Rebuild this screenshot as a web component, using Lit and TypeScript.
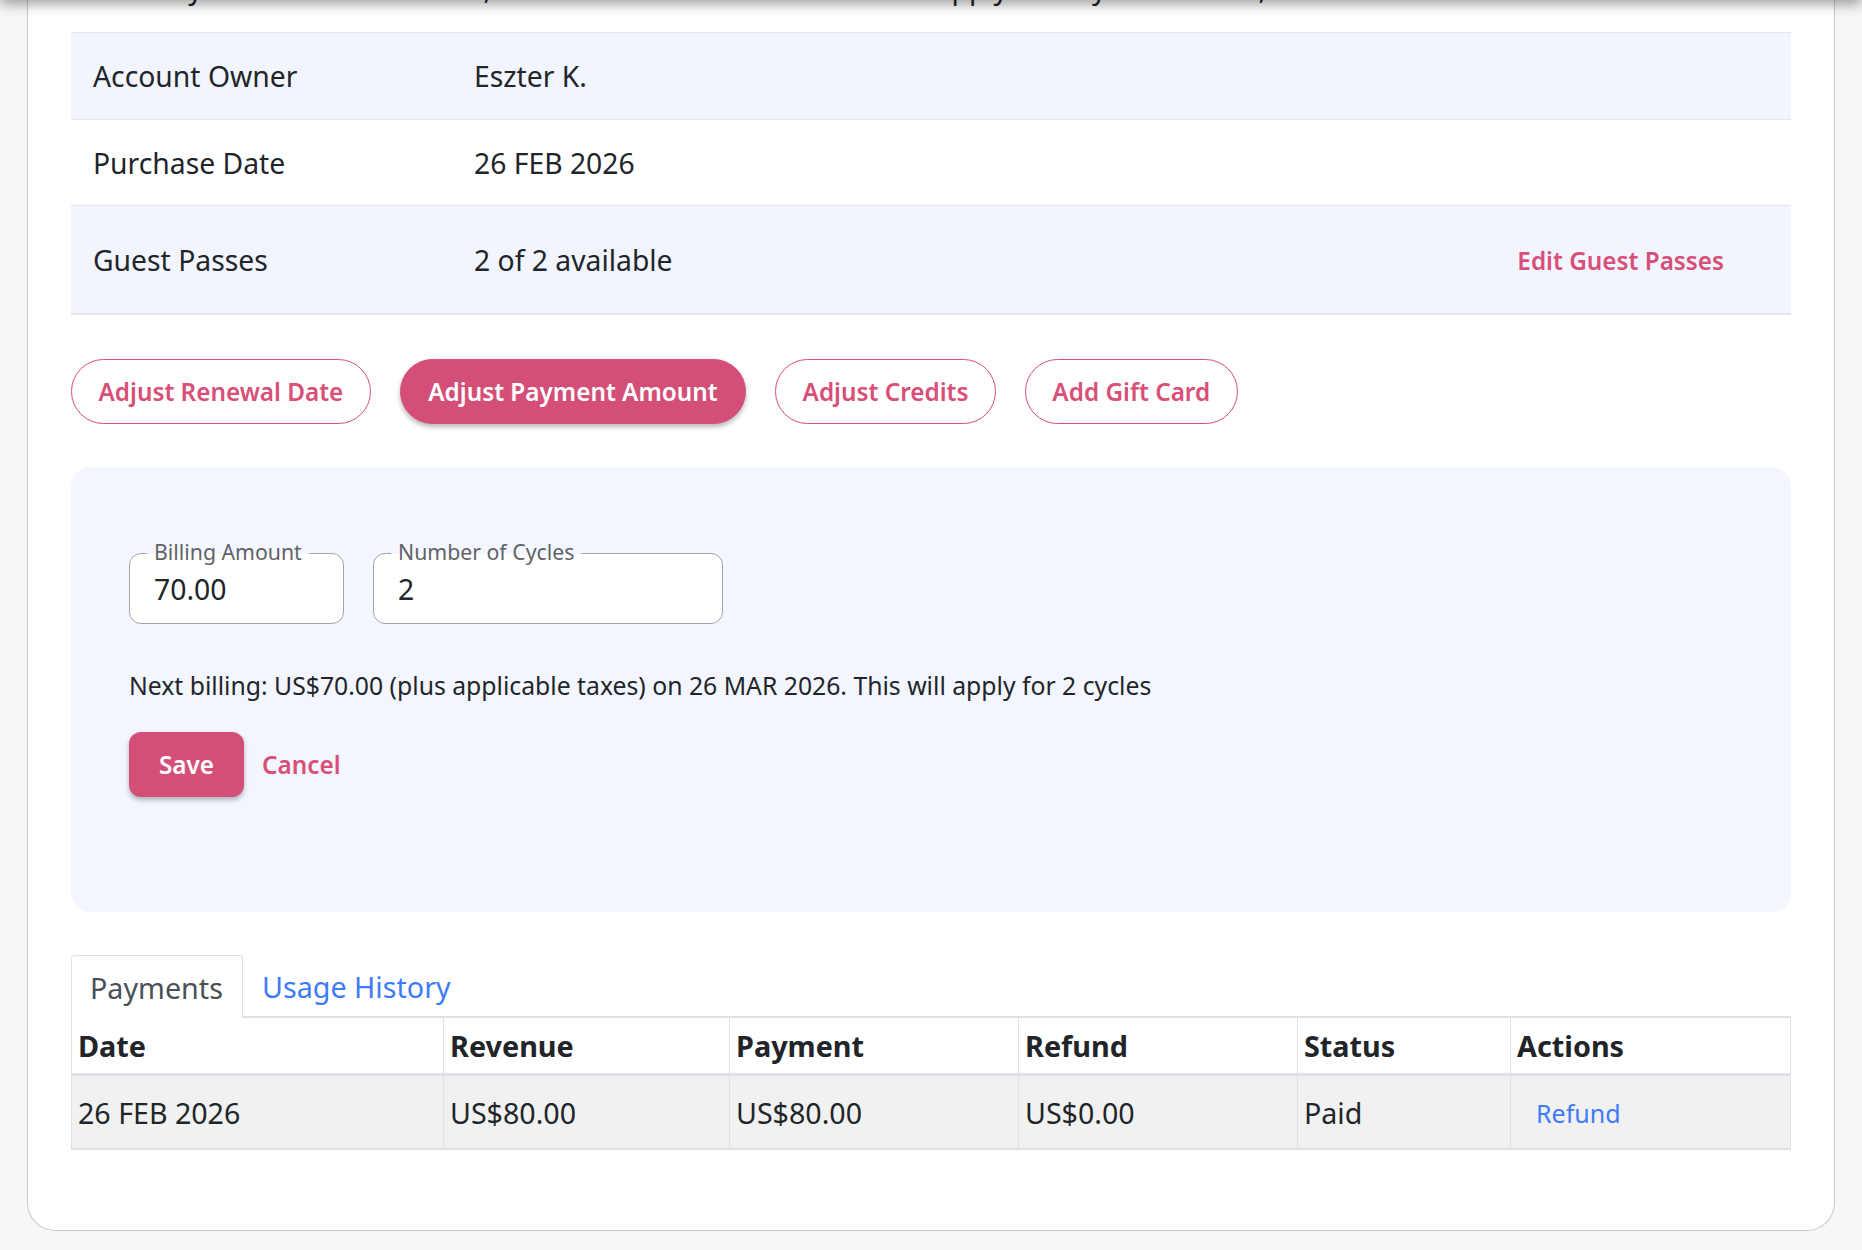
import { css, html, LitElement } from 'lit'
import { customElement, state } from 'lit/decorators.js'

interface InfoRow {
  label: string
  value: string
  height: number
  action?: string
}

const infoRows: InfoRow[] = [
  { label: 'Account Owner', value: 'Eszter K.', height: 87 },
  { label: 'Purchase Date', value: '26 FEB 2026', height: 86 },
  { label: 'Guest Passes', value: '2 of 2 available', height: 110, action: 'Edit Guest Passes' },
]

const adjustments = ['Adjust Renewal Date', 'Adjust Payment Amount', 'Adjust Credits', 'Add Gift Card']

const columns = [
  { title: 'Date', value: '26 FEB 2026', width: 372 },
  { title: 'Revenue', value: 'US$80.00', width: 286 },
  { title: 'Payment', value: 'US$80.00', width: 289 },
  { title: 'Refund', value: 'US$0.00', width: 279 },
  { title: 'Status', value: 'Paid', width: 213 },
  { title: 'Actions', value: '', width: 280 },
]

@customElement('app-root')
export class AppRoot extends LitElement {
  static styles = css`
    :host {
      display: block;
      height: 1250px;
      overflow: hidden;
      position: relative;
      background: #f7f7f7;
      font-family: 'Noto Sans', sans-serif;
      color: #212529;
    }
    .top-shadow {
      position: absolute;
      top: -10px;
      left: 0;
      right: 0;
      height: 10px;
      box-shadow: 0 2px 14px rgba(0, 0, 0, 0.55);
    }
    .card {
      box-sizing: border-box;
      height: 1231px;
      margin: 0 27px;
      padding: 0 43px;
      background: #fff;
      border: 1px solid #c9c9d6;
      border-top: none;
      border-radius: 0 0 28px 28px;
    }
    .clipped {
      height: 32px;
      display: flex;
      align-items: flex-end;
      font-size: 28.3px;
      line-height: 38px;
      box-sizing: border-box;
      overflow: hidden;
      padding: 0 22px 25px;
      white-space: nowrap;
    }
    .clipped .lbl {
      width: 381px;
      flex: none;
    }
    .info {
      display: flex;
      align-items: center;
      padding: 0 67px 0 22px;
      border-top: 1px solid #e3e6ea;
      font-size: 28.3px;
      box-sizing: border-box;
    }
    .info.last {
      border-bottom: 2px solid #e3e6ea;
    }
    .info.shade {
      background: #f2f5fe;
    }
    .info .lbl {
      width: 381px;
      flex: none;
    }
    .info .val {
      flex: 1;
    }
    .link {
      color: #d84f78;
      font-weight: 600;
      font-size: 24.3px;
      line-height: 36px;
    }
    .info .link {
      padding-top: 2px;
    }
    .pills {
      display: flex;
      gap: 29px;
      margin-top: 44px;
    }
    .pill {
      box-sizing: border-box;
      height: 65px;
      padding: 0 26.5px;
      border: 1px solid #d84f78;
      border-radius: 33px;
      background: #fff;
      color: #d84f78;
      font: 600 24.3px 'Noto Sans', sans-serif;
    }
    .pill.active {
      padding: 0 27.5px;
      background: #d44f78;
      color: #fff;
      box-shadow: 0 3px 5px rgba(0, 0, 0, 0.28);
    }
    .panel {
      box-sizing: border-box;
      height: 445px;
      margin-top: 43px;
      padding: 86px 58px 0;
      background: #f3f6ff;
      border-radius: 20px;
    }
    .fields {
      display: flex;
      gap: 29px;
    }
    .field {
      position: relative;
      box-sizing: border-box;
      height: 71px;
      padding: 16px 24px 0;
      background: #fff;
      border: 1px solid #a3a3a8;
      border-radius: 12px;
      font-size: 28.4px;
      line-height: 38px;
    }
    .field label {
      position: absolute;
      top: -15px;
      left: 17px;
      padding: 0 7px;
      font-size: 21.25px;
      line-height: 26px;
      color: #5f6368;
      background: linear-gradient(#f3f6ff 57%, #fff 57%);
    }
    .note {
      margin: 45px 0 0;
      font-size: 24.75px;
      line-height: 34px;
    }
    .form-actions {
      display: flex;
      align-items: center;
      gap: 18px;
      margin-top: 29px;
    }
    .save {
      box-sizing: border-box;
      width: 115px;
      height: 65px;
      border: none;
      border-radius: 12px;
      background: #d44f78;
      color: #fff;
      font: 600 24.3px 'Noto Sans', sans-serif;
      box-shadow: 0 3px 5px rgba(0, 0, 0, 0.28);
    }
    .tabs {
      display: flex;
      margin-top: 43px;
      height: 63px;
      font-size: 28.7px;
    }
    .tab {
      box-sizing: border-box;
      height: 63px;
      padding: 12px 19px 0;
      line-height: 40px;
      color: #3f7bf6;
    }
    .tab.active {
      width: 172px;
      padding-left: 18px;
      color: #495057;
      background: #fff;
      border: 1px solid #dee2e6;
      border-bottom: none;
      border-radius: 4px 4px 0 0;
      position: relative;
      z-index: 1;
    }
    table {
      width: 1719px;
      margin-top: -2px;
      border-collapse: collapse;
      table-layout: fixed;
      font-size: 28.6px;
    }
    th,
    td {
      padding: 0 6px;
      text-align: left;
      border-left: 1px solid #dee2e6;
      border-right: 1px solid #dee2e6;
    }
    th {
      height: 55px;
      font-size: 28.8px;
      font-weight: 700;
      border-top: 2px solid #dee2e6;
      border-bottom: 3px solid #dee2e6;
    }
    td {
      height: 72px;
      background: #f1f1f2;
      border-bottom: 2px solid #dee2e6;
    }
    .refund {
      position: relative;
      top: -1px;
      padding-left: 19px;
      font-size: 25px;
      color: #3f7bf6;
    }
  `

  @state()
  private activeTab = 'Payments'

  render() {
    return html`
      <div class="card">
        <div class="clipped">
          <span class="lbl">Monthly Price</span>
          <span>I, and the new rate noted here will apply to only this month, if used</span>
        </div>
        ${infoRows.map(
          (row, i) => html`<div
            class="info ${i % 2 === 0 ? 'shade' : ''} ${i === infoRows.length - 1 ? 'last' : ''}"
            style="height: ${row.height}px"
          >
            <span class="lbl">${row.label}</span>
            <span class="val">${row.value}</span>
            ${row.action ? html`<span class="link">${row.action}</span>` : ''}
          </div>`,
        )}
        <div class="pills">
          ${adjustments.map(
            (name) =>
              html`<button class="pill ${name === 'Adjust Payment Amount' ? 'active' : ''}">${name}</button>`,
          )}
        </div>
        <div class="panel">
          <div class="fields">
            <div class="field" style="width: 215px"><label>Billing Amount</label>70.00</div>
            <div class="field" style="width: 350px"><label>Number of Cycles</label>2</div>
          </div>
          <p class="note">Next billing: US$70.00 (plus applicable taxes) on 26 MAR 2026. This will apply for 2 cycles</p>
          <div class="form-actions">
            <button class="save">Save</button>
            <span class="link">Cancel</span>
          </div>
        </div>
        <div class="tabs">
          ${['Payments', 'Usage History'].map(
            (tab) => html`<div class="tab ${tab === this.activeTab ? 'active' : ''}">${tab}</div>`,
          )}
        </div>
        <table>
          <colgroup>
            ${columns.map((c) => html`<col style="width: ${c.width}px" />`)}
          </colgroup>
          <thead>
            <tr>${columns.map((c) => html`<th>${c.title}</th>`)}</tr>
          </thead>
          <tbody>
            <tr>
              ${columns.map((c) =>
                c.title === 'Actions' ? html`<td><span class="refund">Refund</span></td>` : html`<td>${c.value}</td>`,
              )}
            </tr>
          </tbody>
        </table>
      </div>
      <div class="top-shadow"></div>
    `
  }
}
